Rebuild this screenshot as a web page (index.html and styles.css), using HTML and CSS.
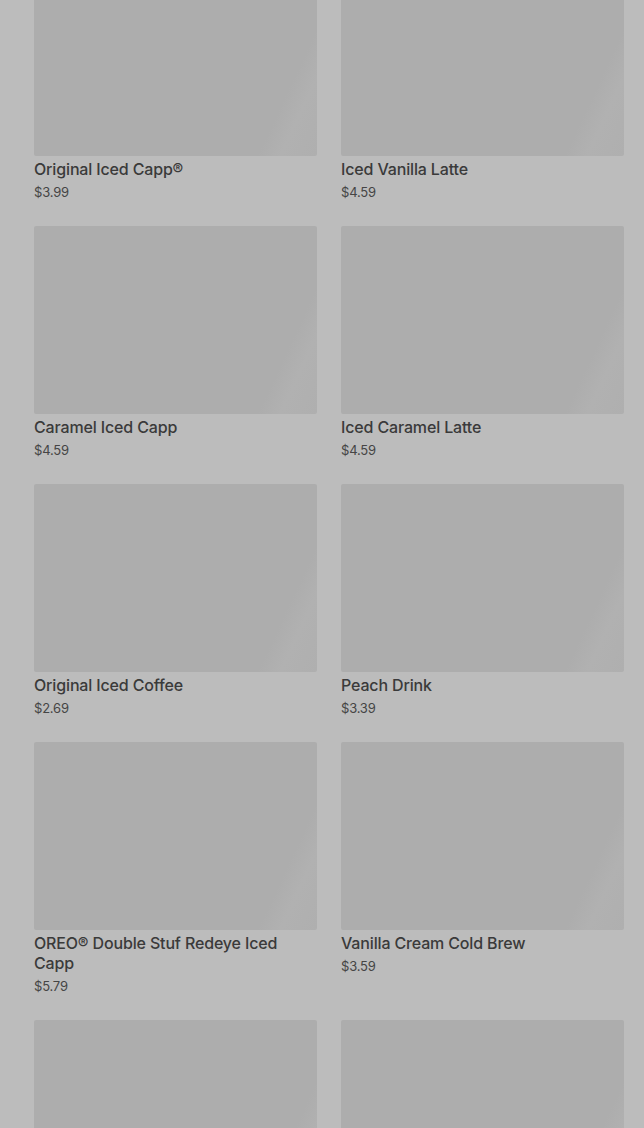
FILE: index.html
```html
<!DOCTYPE html>
<html>
<head>
<meta charset="utf-8">
<link rel="stylesheet" href="styles.css">
</head>
<body>
<div class="grid">
  <div class="card"><div class="thumb"></div><div class="name">Original Iced Capp®</div><div class="price">$3.99</div></div>
  <div class="card"><div class="thumb"></div><div class="name">Iced Vanilla Latte</div><div class="price">$4.59</div></div>
  <div class="card"><div class="thumb"></div><div class="name">Caramel Iced Capp</div><div class="price">$4.59</div></div>
  <div class="card"><div class="thumb"></div><div class="name">Iced Caramel Latte</div><div class="price">$4.59</div></div>
  <div class="card"><div class="thumb"></div><div class="name">Original Iced Coffee</div><div class="price">$2.69</div></div>
  <div class="card"><div class="thumb"></div><div class="name">Peach Drink</div><div class="price">$3.39</div></div>
  <div class="card"><div class="thumb"></div><div class="name">OREO® Double Stuf Redeye Iced Capp</div><div class="price">$5.79</div></div>
  <div class="card"><div class="thumb"></div><div class="name">Vanilla Cream Cold Brew</div><div class="price">$3.59</div></div>
  <div class="card"><div class="thumb"></div><div class="name">&nbsp;</div><div class="price">&nbsp;</div></div>
  <div class="card"><div class="thumb"></div><div class="name">&nbsp;</div><div class="price">&nbsp;</div></div>
</div>
</body>
</html>
```

FILE: styles.css
```css
html, body {
  margin: 0;
  padding: 0;
  background: #bcbcbc;
  overflow: hidden;
}
body {
  font-family: Inter, "Noto Sans", sans-serif;
  color: #3a3a3a;
}
.grid {
  display: grid;
  grid-template-columns: 283px 283px;
  column-gap: 24px;
  row-gap: 24px;
  padding-left: 34px;
  margin-top: -32px;
}
.thumb {
  height: 188px;
  border-radius: 2px;
  background: linear-gradient(115deg, #adadad 0%, #adadad 84%, #b1b1b1 90%, #afafaf 100%);
}
.name {
  margin-top: 3px;
  font-size: 16px;
  line-height: 20px;
  font-weight: 500;
  letter-spacing: -0.15px;
  color: #3a3a3a;
}
.price {
  margin-top: 3px;
  font-size: 13px;
  line-height: 20px;
  letter-spacing: -0.2px;
  color: #454545;
}
```
